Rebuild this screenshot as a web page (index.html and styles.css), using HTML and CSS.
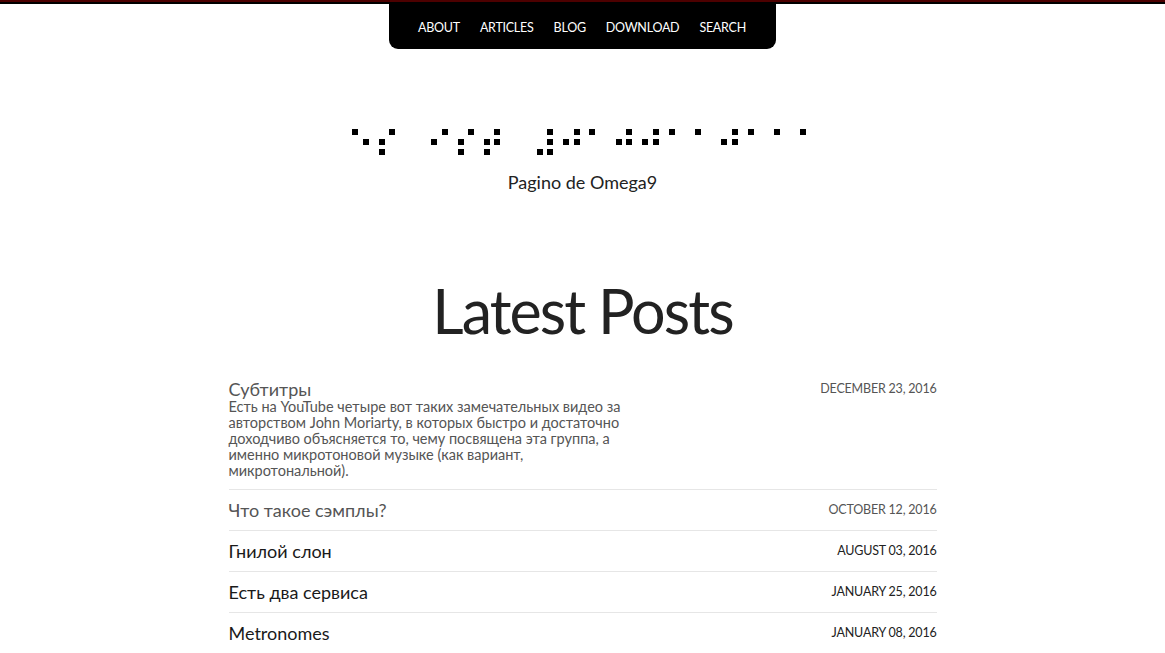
FILE: index.html
```html
<!DOCTYPE html>
<html lang="ru">
<head>
<meta charset="utf-8">
<title>Pagino de Omega9</title>
<link rel="stylesheet" href="styles.css">
</head>
<body>
<header class="site-header">
  <nav class="main-nav">
    <a href="#">About</a>
    <a href="#">Articles</a>
    <a href="#">Blog</a>
    <a href="#">Download</a>
    <a href="#">Search</a>
  </nav>
</header>

<section class="brand">
  <div class="braille" aria-label="Omega9">
    <span class="cell"><i class="on"></i><i></i><i></i><i></i><i class="on"></i><i></i></span>
    <span class="cell"><i></i><i class="on"></i><i class="on"></i><i class="on"></i><i></i><i></i></span>
    <span class="cell"><i></i><i></i><i></i><i></i><i></i><i></i></span>
    <span class="cell"><i></i><i class="on"></i><i></i><i class="on"></i><i></i><i></i></span>
    <span class="cell"><i></i><i class="on"></i><i class="on"></i><i class="on"></i><i></i><i></i></span>
    <span class="cell"><i></i><i class="on"></i><i class="on"></i><i class="on"></i><i class="on"></i><i></i></span>
    <span class="cell"><i></i><i></i><i></i><i></i><i></i><i></i></span>
    <span class="cell"><i></i><i></i><i class="on"></i><i class="on"></i><i class="on"></i><i class="on"></i></span>
    <span class="cell"><i></i><i class="on"></i><i></i><i class="on"></i><i class="on"></i><i></i></span>
    <span class="cell"><i class="on"></i><i></i><i></i><i></i><i></i><i></i></span>
    <span class="cell"><i></i><i class="on"></i><i></i><i class="on"></i><i class="on"></i><i></i></span>
    <span class="cell"><i></i><i class="on"></i><i></i><i class="on"></i><i class="on"></i><i></i></span>
    <span class="cell"><i class="on"></i><i></i><i></i><i></i><i></i><i></i></span>
    <span class="cell"><i class="on"></i><i></i><i></i><i></i><i></i><i></i></span>
    <span class="cell"><i></i><i class="on"></i><i></i><i class="on"></i><i class="on"></i><i></i></span>
    <span class="cell"><i class="on"></i><i></i><i></i><i></i><i></i><i></i></span>
    <span class="cell"><i class="on"></i><i></i><i></i><i></i><i></i><i></i></span>
    <span class="cell"><i class="on"></i><i></i><i></i><i></i><i></i><i></i></span>
  </div>
  <p class="tagline">Pagino de Omega9</p>
</section>

<main class="posts">
  <h1 class="posts-title">Latest Posts</h1>
  <ul class="post-list">
    <li class="post visited">
      <div class="post-body">
        <a class="post-link" href="#">Субтитры</a>
        <p class="post-summary">Есть на YouTube четыре вот таких замечательных видео за авторством John Moriarty, в которых быстро и достаточно доходчиво объясняется то, чему посвящена эта группа, а именно микротоновой музыке (как вариант, микротональной).</p>
      </div>
      <span class="post-date">December 23, 2016</span>
    </li>
    <li class="post visited">
      <div class="post-body"><a class="post-link" href="#">Что такое сэмплы?</a></div>
      <span class="post-date">October 12, 2016</span>
    </li>
    <li class="post">
      <div class="post-body"><a class="post-link" href="#">Гнилой слон</a></div>
      <span class="post-date">August 03, 2016</span>
    </li>
    <li class="post">
      <div class="post-body"><a class="post-link" href="#">Есть два сервиса</a></div>
      <span class="post-date">January 25, 2016</span>
    </li>
    <li class="post">
      <div class="post-body"><a class="post-link" href="#">Metronomes</a></div>
      <span class="post-date">January 08, 2016</span>
    </li>
  </ul>
</main>
</body>
</html>
```

FILE: styles.css
```css
* { box-sizing: border-box; }

html, body {
  margin: 0;
  padding: 0;
  background: #fff;
}

body {
  font-family: "Lato", "Open Sans", sans-serif;
  color: #222;
  border-top: 2px solid #4d0000;
}

.site-header {
  display: flex;
  justify-content: center;
  border-top: 2px solid #000;
}

.main-nav {
  display: flex;
  align-items: center;
  gap: 20px;
  height: 45px;
  padding: 0 30px 0 29px;
  background: #000;
  border-radius: 0 0 9px 9px;
}

.main-nav a {
  color: #fff;
  text-decoration: none;
  text-transform: uppercase;
  font-size: 12.5px;
  letter-spacing: -0.25px;
  line-height: 16px;
  padding-top: 2px;
}

.brand {
  display: flex;
  flex-direction: column;
  align-items: center;
  margin-top: 80px;
}

.braille {
  display: flex;
  gap: 9.87px;
  padding-left: 4px;
}

.cell {
  display: grid;
  grid-template-columns: 6px 6px;
  grid-template-rows: 6px 6px 6px;
  grid-auto-flow: column;
  column-gap: 4.5px;
  row-gap: 4px;
}

.cell i { display: block; }
.cell i.on { background: #000; }

.tagline {
  margin: 15px 0 0;
  font-size: 18px;
  line-height: 24px;
  color: #222;
}

.posts {
  width: 708px;
  margin: 0 auto;
}

.posts-title {
  margin: 79px 0 20px;
  text-align: center;
  font-size: 61px;
  font-weight: 400;
  line-height: 76px;
  letter-spacing: -1.9px;
  color: #222;
}

.post-list {
  list-style: none;
  margin: 0;
  padding: 0;
}

.post {
  display: flex;
  justify-content: space-between;
  align-items: flex-start;
  padding: 10px 0;
  border-bottom: 1px solid #e6e6e6;
}

.post:last-child { border-bottom: none; }

.post-link {
  display: block;
  font-size: 18px;
  line-height: 20px;
  color: #1a1a1a;
  text-decoration: none;
}

.post-summary {
  width: 410px;
  margin: 0;
  font-size: 14.5px;
  line-height: 16px;
  color: #555;
}

.post-date {
  font-size: 12.5px;
  line-height: 20px;
  letter-spacing: -0.2px;
  text-transform: uppercase;
  color: #222;
}

.post.visited .post-link,
.post.visited .post-date {
  color: #555;
}
```
